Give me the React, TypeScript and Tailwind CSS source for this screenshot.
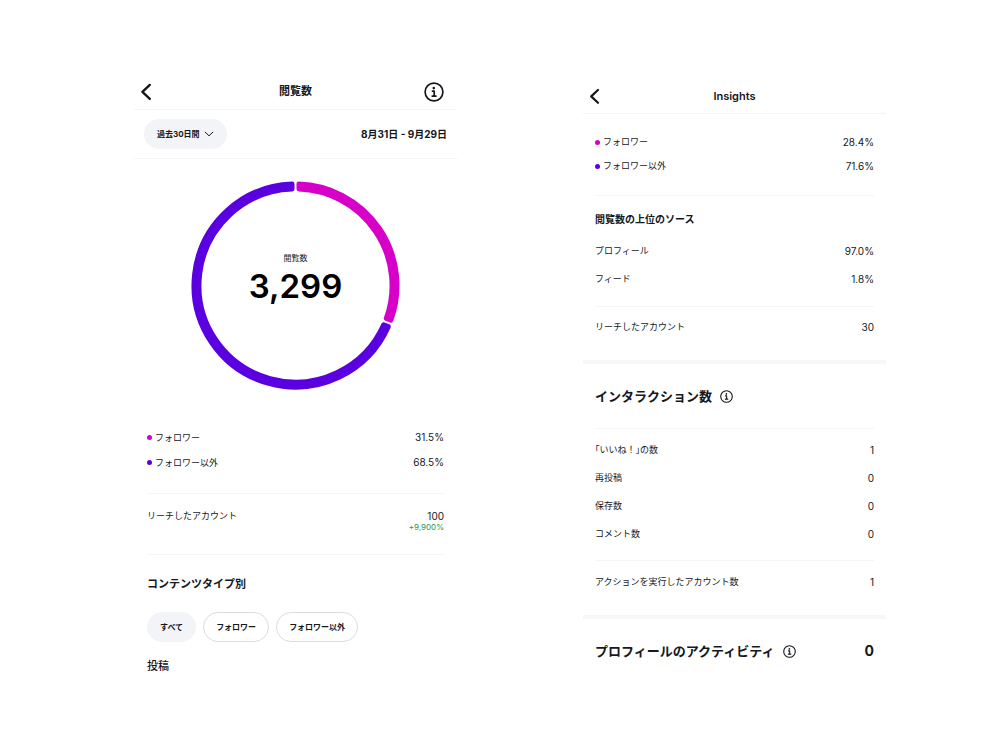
import type { ReactNode } from "react";

const PINK = "#d600c8";
const PURPLE = "#5a00e0";

function BackIcon({ className }: { className: string }) {
  return (
    <svg viewBox="0 0 12 18" className={className} fill="none" stroke="currentColor" strokeWidth="2.4" strokeLinecap="round" strokeLinejoin="round" aria-hidden="true">
      <path d="M9.8 1.9 2.4 8.9 9.8 15.9" />
    </svg>
  );
}

function InfoIcon({ className }: { className: string }) {
  return (
    <svg viewBox="0 0 20 20" className={className} fill="none" stroke="currentColor" aria-hidden="true">
      <circle cx="10" cy="10" r="8.9" strokeWidth="1.7" />
      <circle cx="9.8" cy="6.1" r="1.3" fill="currentColor" stroke="none" />
      <path d="M8.4 9.1h1.8v4.8M8.2 14.1h3.8" strokeWidth="1.7" strokeLinecap="round" strokeLinejoin="round" />
    </svg>
  );
}

function ringSegment(start: number, end: number) {
  const c = 105;
  const outer = 102;
  const inner = 97;
  const inset = 3.5;
  const point = (r: number, a: number) =>
    `${(c + r * Math.sin(a)).toFixed(2)} ${(c - r * Math.cos(a)).toFixed(2)}`;
  const a0 = start * 2 * Math.PI;
  const a1 = end * 2 * Math.PI;
  const large = end - start > 0.5 ? 1 : 0;
  return [
    `M${point(outer, a0 + inset / outer)}`,
    `A${outer} ${outer} 0 ${large} 1 ${point(outer, a1 - inset / outer)}`,
    `L${point(inner, a1 - inset / inner)}`,
    `A${inner} ${inner} 0 ${large} 0 ${point(inner, a0 + inset / inner)}Z`,
  ].join("");
}

function Ring({ share }: { share: number }) {
  return (
    <svg viewBox="0 0 210 210" className="col-start-1 row-start-1 size-[209px]" strokeWidth="5" strokeLinejoin="round" aria-hidden="true">
      <path d={ringSegment(0, share)} fill={PINK} stroke={PINK} />
      <path d={ringSegment(share, 1)} fill={PURPLE} stroke={PURPLE} />
    </svg>
  );
}

function Row({ label, value, className, dot }: { label: ReactNode; value: ReactNode; className: string; dot?: string }) {
  return (
    <div className={`flex items-center justify-between ${className}`}>
      <dt className="flex items-center gap-[3px] text-[9px]">
        {dot && <span className={`size-[5px] rounded-full ${dot}`} />}
        <span>{label}</span>
      </dt>
      <dd>{value}</dd>
    </div>
  );
}

function Divider({ className }: { className: string }) {
  return <hr className={`border-[#f5f5f6] ${className}`} />;
}

function ViewsPanel() {
  return (
    <section className="col-start-2 pt-[74px]">
      <header className="grid h-9 grid-cols-[1fr_auto_1fr] items-center border-b border-[#f5f5f6] px-1.5">
        <button type="button" aria-label="戻る" className="justify-self-start">
          <BackIcon className="h-[18px] w-3" />
        </button>
        <h1 className="text-[11px] font-bold">閲覧数</h1>
        <button type="button" aria-label="情報" className="mr-[7px] justify-self-end">
          <InfoIcon className="size-5" />
        </button>
      </header>
      <div className="flex h-[49px] items-center justify-between border-b border-[#f5f5f6] px-2.5">
        <button type="button" className="flex h-[30px] items-center gap-1 rounded-full bg-[#f3f4f7] px-[13px] text-[8px] font-bold">
          過去30日間
          <svg viewBox="0 0 10 10" className="size-2.5" fill="none" stroke="currentColor" strokeLinecap="round" strokeLinejoin="round" aria-hidden="true">
            <path d="M1.2 3.2 5 6.8 8.8 3.2" />
          </svg>
        </button>
        <p className="text-[10px] font-bold">8月31日 - 9月29日</p>
      </div>

      <div className="px-[13px]">
        <div className="mt-[22px] grid place-items-center">
          <Ring share={0.311} />
          <div className="col-start-1 row-start-1 flex flex-col items-center pb-4">
            <p className="text-[8px] leading-4">閲覧数</p>
            <p className="text-[33px] leading-10 font-semibold text-black">3,299</p>
          </div>
        </div>

        <dl className="mt-[35px] text-[10px]">
          <Row className="h-[25px]" label="フォロワー" value="31.5%" dot="bg-[#d600c8]" />
          <Row className="h-[25px]" label="フォロワー以外" value="68.5%" dot="bg-[#5a00e0]" />
        </dl>
        <Divider className="mt-[18px]" />
        <dl className="mt-4 flex justify-between leading-3">
          <dt className="text-[9px]">リーチしたアカウント</dt>
          <dd className="text-right text-[10px]">
            100
            <span className="block text-[8px] leading-[10px] text-[#279455]">+9,900%</span>
          </dd>
        </dl>
        <Divider className="mt-[22px]" />

        <h2 className="mt-[21px] text-[11px] leading-4 font-bold">コンテンツタイプ別</h2>
        <div className="mt-5 flex gap-[7px] text-[8px] font-bold">
          <button type="button" aria-pressed="true" className="h-[30px] rounded-full border border-[#f3f4f7] bg-[#f3f4f7] px-3">すべて</button>
          <button type="button" aria-pressed="false" className="h-[30px] rounded-full border border-[#dcdcdc] px-3">フォロワー</button>
          <button type="button" aria-pressed="false" className="h-[30px] rounded-full border border-[#dcdcdc] px-3">フォロワー以外</button>
        </div>
        <h3 className="mt-4 text-[11px] leading-4 font-medium">投稿</h3>
      </div>
    </section>
  );
}

function InsightsPanel() {
  return (
    <section className="col-start-4 pt-[79px]">
      <header className="grid h-[35px] grid-cols-[1fr_auto_1fr] items-center border-b border-[#f5f5f6] px-1.5">
        <button type="button" aria-label="戻る" className="justify-self-start">
          <BackIcon className="h-[17px] w-[11px]" />
        </button>
        <h1 className="text-[11px] font-semibold">Insights</h1>
      </header>

      <div className="px-3">
        <dl className="mt-4 text-[10px]">
          <Row className="h-6" label="フォロワー" value="28.4%" dot="bg-[#d600c8]" />
          <Row className="h-6" label="フォロワー以外" value="71.6%" dot="bg-[#5a00e0]" />
        </dl>
        <Divider className="mt-[17px]" />
        <h2 className="mt-[15px] text-[10px] leading-4 font-bold">閲覧数の上位のソース</h2>
        <dl className="mt-2.5 text-[10px]">
          <Row className="h-7" label="プロフィール" value="97.0%" />
          <Row className="h-7" label="フィード" value="1.8%" />
        </dl>
        <Divider className="mt-[13px]" />
        <dl className="mt-1.5 text-[10px]">
          <Row className="h-7" label="リーチしたアカウント" value="30" />
        </dl>
      </div>

      <hr className="mt-[19px] h-1 border-0 bg-[#f7f7f8]" />

      <div className="px-3">
        <h2 className="mt-[22px] flex items-center gap-2 text-[13px] leading-5 font-bold">
          インタラクション数
          <InfoIcon className="size-[13px]" />
        </h2>
        <Divider className="mt-[22px]" />
        <dl className="mt-[7px] text-[10px]">
          <Row
            className="h-7"
            label={
              <>
                <span className="[font-feature-settings:'halt']">「</span>いいね！
                <span className="[font-feature-settings:'halt']">」</span>の数
              </>
            }
            value="1"
          />
          <Row className="h-7" label="再投稿" value="0" />
          <Row className="h-7" label="保存数" value="0" />
          <Row className="h-7" label="コメント数" value="0" />
        </dl>
        <Divider className="mt-3" />
        <dl className="mt-[7px] text-[10px]">
          <Row className="h-7" label="アクションを実行したアカウント数" value="1" />
        </dl>
      </div>

      <hr className="mt-[19px] h-1 border-0 bg-[#f7f7f8]" />

      <div className="mt-[22px] flex items-center justify-between px-3 text-[13px] leading-5 font-bold">
        <h2 className="flex items-center gap-2">
          プロフィールのアクティビティ
          <InfoIcon className="size-[13px]" />
        </h2>
        <p className="text-[14px]">0</p>
      </div>
    </section>
  );
}

export default function App() {
  return (
    <main
      lang="ja"
      className="grid min-h-screen grid-cols-[134fr_323fr_126fr_303fr_114fr] bg-white font-['Inter','Noto_Sans_CJK_JP',sans-serif] text-[#15181c]"
    >
      <ViewsPanel />
      <InsightsPanel />
    </main>
  );
}
